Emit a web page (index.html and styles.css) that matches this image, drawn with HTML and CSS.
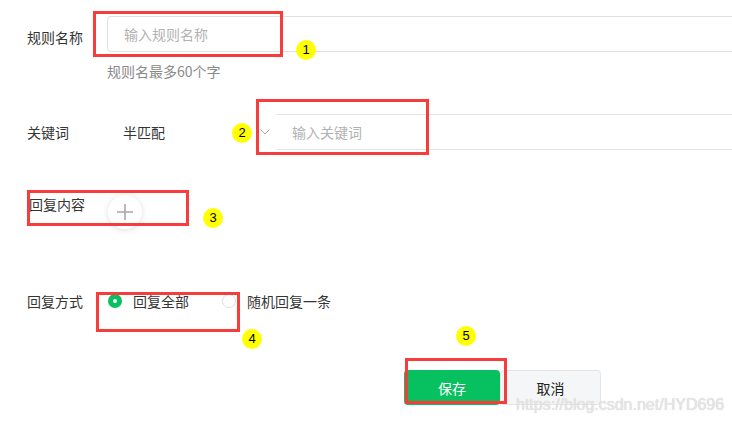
FILE: index.html
```html
<!DOCTYPE html>
<html>
<head>
  <title>回复规则</title>
  <link rel="stylesheet" href="styles.css">
</head>
<body>
  <div class="form">
    <div class="row row-name">
      <div class="label label-input">规则名称</div>
      <div class="field">
        <div class="text-input">输入规则名称</div>
        <div class="hint">规则名最多60个字</div>
      </div>
    </div>

    <div class="row row-keyword">
      <div class="label">关键词</div>
      <div class="select">
        <span>半匹配</span>
        <svg class="chevron" width="10" height="6" viewBox="0 0 10 6">
          <path d="M0.5 0.5 L5 5 L9.5 0.5" fill="none" stroke="#b2b2b2" stroke-width="1"/>
        </svg>
      </div>
      <div class="keyword-input">输入关键词</div>
    </div>

    <div class="row row-content">
      <div class="label content">回复内容</div>
      <div class="add-btn">
        <svg width="18" height="18" viewBox="0 0 18 18">
          <path d="M9 1 V17 M1 9 H17" stroke="#a8a8a8" stroke-width="1.6"/>
        </svg>
      </div>
    </div>

    <div class="row row-mode">
      <div class="label">回复方式</div>
      <label class="radio">
        <span class="dot checked"></span>
        <span>回复全部</span>
      </label>
      <label class="radio">
        <span class="dot"></span>
        <span>随机回复一条</span>
      </label>
    </div>

    <div class="actions">
      <button class="btn btn-save">保存</button>
      <button class="btn btn-cancel">取消</button>
    </div>
  </div>

  <!-- annotation marks drawn over the form -->
  <div class="mark box-1"></div>
  <div class="mark box-2"></div>
  <div class="mark box-3"></div>
  <div class="mark box-4"></div>
  <div class="mark box-5"></div>
  <div class="num num-1">1</div>
  <div class="num num-2">2</div>
  <div class="num num-3">3</div>
  <div class="num num-4">4</div>
  <div class="num num-5">5</div>

  <div class="watermark">https://blog.csdn.net/HYD696</div>
</body>
</html>
```

FILE: styles.css
```css
body {
  margin: 0;
  padding: 0;
  position: relative;
  overflow: hidden;
  height: 424px;
  background: #fff;
  font-family: "Noto Sans CJK SC", "Noto Sans", sans-serif;
  font-size: 14px;
  color: #353535;
}

.form {
  padding: 16px 0 0 27px;
}

.row {
  display: flex;
  align-items: flex-start;
}

.label {
  width: 80px;
  flex: none;
  line-height: 20px;
}

.label-input {
  margin-top: 11px;
}

.field {
  flex: 1;
}

/* runs off the right edge, so no right border */
.text-input {
  height: 34px;
  line-height: 34px;
  border: 1px solid #e2e2e2;
  border-right: none;
  border-radius: 4px 0 0 4px;
  padding-left: 16px;
  color: #b2b2b2;
}

.hint {
  margin-top: 9px;
  line-height: 20px;
  color: #8a8a8a;
}

/* keyword row */
.row-keyword {
  margin-top: 33px;
  align-items: center;
  height: 36px;
}

.select {
  width: 170px;
  flex: none;
  display: flex;
  align-items: center;
  padding-left: 16px;
  box-sizing: border-box;
  height: 36px;
}

.select span {
  flex: 1;
}

.chevron {
  margin-right: 7px;
}

.keyword-input {
  flex: 1;
  height: 34px;
  line-height: 34px;
  border-top: 1px solid #e2e2e2;
  border-bottom: 1px solid #e2e2e2;
  padding-left: 15px;
  color: #b2b2b2;
}

/* content row */
.row-content {
  margin-top: 44px;
}

.label.content {
  width: 78px;
  margin-left: 2px;
}

.add-btn {
  width: 34px;
  height: 34px;
  margin-top: 1px;
  margin-left: 1px;
  border-radius: 50%;
  background: #fff;
  box-shadow: 0 1px 7px rgba(0, 0, 0, 0.13);
  display: flex;
  align-items: center;
  justify-content: center;
}

/* reply mode row */
.row-mode {
  margin-top: 62px;
  align-items: center;
}

.radio {
  display: flex;
  align-items: center;
  gap: 11px;
  line-height: 20px;
  margin-left: 1px;
}

.radio + .radio {
  margin-left: 33px;
}

.dot {
  width: 14px;
  height: 14px;
  box-sizing: border-box;
  border-radius: 50%;
  border: 1px solid #e0e0e0;
  background: #fff;
  position: relative;
}

.dot.checked {
  border: none;
  background: #07c160;
}

.dot.checked::after {
  content: "";
  position: absolute;
  left: 5px;
  top: 5px;
  width: 4px;
  height: 4px;
  border-radius: 50%;
  background: #fff;
}

/* buttons */
.actions {
  margin-top: 59px;
  padding-left: 377px;
  display: flex;
}

.btn {
  height: 35px;
  border-radius: 4px;
  font-family: inherit;
  font-size: 14px;
  padding: 0;
  cursor: pointer;
}

.btn-save {
  width: 96px;
  border: none;
  background: #07c160;
  color: #fff;
}

.btn-cancel {
  width: 101px;
  border: 1px solid #e4e4e4;
  background: #f5f6f7;
  color: #222;
}

/* annotations */
.mark {
  position: absolute;
  border: 3px solid #f73c3c;
  box-sizing: border-box;
}

.box-1 { left: 93px; top: 11px; width: 190px; height: 46px; }
.box-2 { left: 256px; top: 99px; width: 173px; height: 56px; }
.box-3 { left: 27px; top: 190px; width: 162px; height: 36px; }
.box-4 { left: 96px; top: 292px; width: 144px; height: 40px; }
.box-5 { left: 405px; top: 358px; width: 102px; height: 46px; }

.num {
  position: absolute;
  width: 20px;
  height: 20px;
  border-radius: 50%;
  background: #ffff00;
  color: #000;
  font-family: "Liberation Sans", Arial, sans-serif;
  font-size: 13px;
  line-height: 20px;
  text-align: center;
}

.num-1 { left: 296px; top: 40px; }
.num-2 { left: 232px; top: 123px; }
.num-3 { left: 203px; top: 208px; }
.num-4 { left: 242px; top: 329px; }
.num-5 { left: 456px; top: 326px; }

.watermark {
  position: absolute;
  left: 516px;
  top: 396px;
  font-family: "Liberation Sans", Arial, sans-serif;
  font-size: 16px;
  color: #e6e6e6;
  text-shadow: 0 0 1px #c8c8c8;
  white-space: nowrap;
}
```
